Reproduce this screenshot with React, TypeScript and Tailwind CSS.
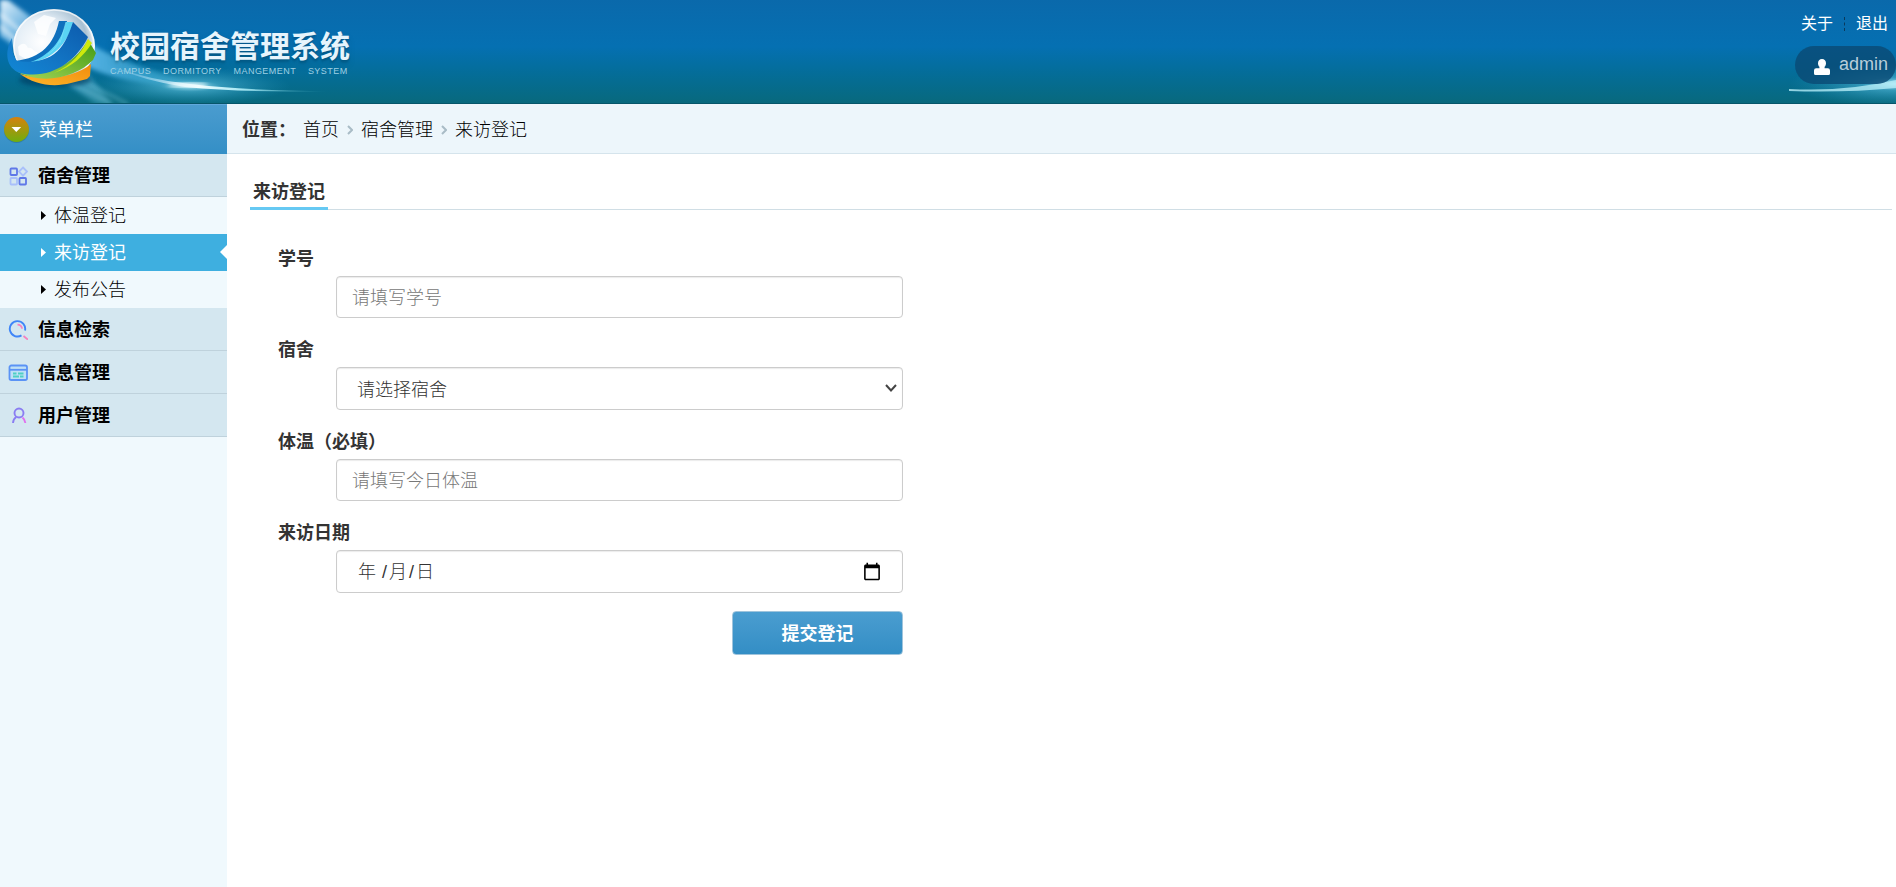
import React, { useState } from 'react';

interface MenuGroup {
  name: string;
  icon: React.ReactNode;
  items?: string[];
}

const GridIcon = () => (
  <svg width="20" height="20" viewBox="0 0 20 20" fill="none" strokeWidth="1.8">
    <rect x="2.5" y="2.5" width="6.500" height="6.500" rx="0.8" stroke="#5f78e8" />
    <path d="M15 1.500 19 5.600 15 9.700 11 5.600Z" stroke="#a9c0fa" />
    <rect x="2.5" y="12" width="6.500" height="6.500" rx="0.8" stroke="#a9c0fa" />
    <rect x="11.5" y="12" width="6.500" height="6.500" rx="0.8" stroke="#5f78e8" />
  </svg>
);

const SearchIcon = () => (
  <svg width="20" height="20" viewBox="0 0 20 20" fill="none" strokeWidth="1.9">
    <path d="M13.500 15.400A7.700 7.700 0 1 1 17 10.500" stroke="#3f86f8" />
    <path d="M9.500 4.600c2.500 0 4.200 1.800 4.600 4" stroke="#f583c0" />
    <path d="M15.500 16 20 19.600" stroke="#f583c0" />
  </svg>
);

const WindowIcon = () => (
  <svg width="20" height="20" viewBox="0 0 20 20" fill="none" strokeWidth="1.8">
    <rect x="1.500" y="2.500" width="17.500" height="14.500" rx="1.800" fill="#bfe0f6" stroke="#5b93f5" />
    <path d="M1.500 6.800H19" stroke="#5b93f5" />
    <path d="M5 10.500H8.500M10 10.500H15.500M5 13.500H11M12 13.500H15.500" stroke="#4fd0c4" strokeWidth="2.200" />
  </svg>
);

const UserIcon = () => (
  <svg width="20" height="20" viewBox="0 0 20 20" fill="none" strokeWidth="1.900">
    <circle cx="11" cy="7" r="4.500" stroke="#8a7df2" />
    <path d="M8.200 11C6.300 12.300 5.200 14.300 5 17" stroke="#8a7df2" />
    <path d="M14.500 11.500C16.300 13 17.200 14.800 17.400 17" stroke="#e070ee" />
  </svg>
);

const menu: MenuGroup[] = [
  { name: '宿舍管理', icon: <GridIcon />, items: ['体温登记', '来访登记', '发布公告'] },
  { name: '信息检索', icon: <SearchIcon /> },
  { name: '信息管理', icon: <WindowIcon /> },
  { name: '用户管理', icon: <UserIcon /> },
];

const LogoArt = () => (
  <svg className="absolute left-0 top-0" width="360" height="104" viewBox="0 0 360 104">
    <defs>
      <radialGradient id="glow">
        <stop offset="0" stopColor="#c9f6ff" stopOpacity="0.95" />
        <stop offset="0.3" stopColor="#5fc4e4" stopOpacity="0.5" />
        <stop offset="1" stopColor="#2a9cc4" stopOpacity="0" />
      </radialGradient>
      <linearGradient id="beam" x1="0" y1="0" x2="1" y2="1">
        <stop offset="0" stopColor="#e6f4fd" />
        <stop offset="0.35" stopColor="#5aaee4" stopOpacity="0.7" />
        <stop offset="1" stopColor="#5cb8d0" stopOpacity="0.4" />
      </linearGradient>
      <linearGradient id="sweep" x1="0" x2="1">
        <stop offset="0" stopColor="#58b4e6" />
        <stop offset="0.6" stopColor="#3aa6d2" stopOpacity="0.7" />
        <stop offset="1" stopColor="#3aa6d2" stopOpacity="0" />
      </linearGradient>
      <linearGradient id="tail" x1="0" x2="1">
        <stop offset="0" stopColor="#6fc0e8" stopOpacity="0.3" />
        <stop offset="0.4" stopColor="#f0fdff" />
        <stop offset="0.6" stopColor="#a4e6f2" />
        <stop offset="1" stopColor="#4fb8c8" stopOpacity="0" />
      </linearGradient>
      <radialGradient id="globe" cx="0.35" cy="0.45" r="0.65">
        <stop offset="0" stopColor="#ffffff" />
        <stop offset="0.5" stopColor="#e4eef6" />
        <stop offset="0.85" stopColor="#a8c0d2" />
        <stop offset="1" stopColor="#f0f7fc" />
      </radialGradient>
      <linearGradient id="ribbon" x1="1" y1="0" x2="0" y2="1">
        <stop offset="0" stopColor="#0c5aac" />
        <stop offset="0.6" stopColor="#1377c6" />
        <stop offset="1" stopColor="#1188d6" />
      </linearGradient>
      <linearGradient id="leaf" x1="1" y1="0" x2="0" y2="1">
        <stop offset="0" stopColor="#429a12" />
        <stop offset="1" stopColor="#a4d658" />
      </linearGradient>
      <linearGradient id="orange" x1="1" y1="0" x2="0" y2="1">
        <stop offset="0" stopColor="#f08c0c" />
        <stop offset="1" stopColor="#ffb52a" />
      </linearGradient>
      <filter id="soft" x="-20%" y="-20%" width="140%" height="140%">
        <feGaussianBlur stdDeviation="2" />
      </filter>
    </defs>
    <path d="M0 0H8L60 38 112 104H96L40 66 0 36Z" fill="url(#beam)" filter="url(#soft)" />
    <path d="M0 14 24 34M0 26 18 42" stroke="#ffffff" strokeWidth="4" opacity="0.5" filter="url(#soft)" />
    <path d="M84 40Q120 64 200 84 130 88 86 66Z" fill="url(#sweep)" filter="url(#soft)" />
    <path d="M70 82 112 104M80 80 128 104" stroke="#7cc8dc" strokeWidth="3" opacity="0.5" filter="url(#soft)" />
    <ellipse cx="190" cy="86" rx="100" ry="19" fill="url(#glow)" />
    <path d="M110 66Q150 80 190 84 250 91 330 91 250 93 185 87 145 81 110 66Z" fill="url(#tail)" />
    <ellipse cx="188" cy="85" rx="20" ry="2" fill="#f0fdff" filter="url(#soft)" />
    <ellipse cx="55" cy="80" rx="36" ry="7" fill="#033f63" opacity="0.7" filter="url(#soft)" />
    <ellipse cx="54" cy="46" rx="41" ry="37" fill="url(#globe)" />
    <ellipse cx="54" cy="46" rx="40" ry="36" fill="none" stroke="#fff" strokeWidth="1.500" opacity="0.7" />
    <path d="M18 47c4-5 8-4 10 1 5-1 5 4 9 4l2 6-10 3-10-6ZM34 22l10-7 12 3-6 6-4 12-8-2Z" fill="#fff" opacity="0.8" />
    <path d="M20 74C45 81 74 78 91 64L90 76 87 79 71 83C52 88 34 84 20 74Z" fill="url(#orange)" />
    <path d="M18 72C50 78 76 62 88 40L96 53 93 60C78 76 44 86 18 72Z" fill="url(#leaf)" />
    <path d="M54 73C72 65 82 52 88 39L92 43C84 56 72 67 54 73Z" fill="#cfe90c" />
    <path d="M15 61C42 58 54 44 59 21H67C64 44 48 62 20 64Z" fill="#0e70bd" />
    <path d="M28 63C50 56 62 40 66 22H73C68 42 54 60 28 63Z" fill="#5ad4f4" />
    <path d="M12 38C4 52 6 68 20 73 50 80 76 62 88 37L73 22C66 42 58 66 17 61 13 56 11 48 12 38Z" fill="url(#ribbon)" />
    <path d="M60 43 66 22M48 54C54 50 57 46 60 40" stroke="#8ae6fa" fill="none" opacity="0.6" />
  </svg>
);

const Header = () => (
  <header className="relative flex h-[104px] justify-between overflow-hidden border-b border-[#06566a] bg-linear-to-b from-[#0a69ab] via-[#0570b2] via-45% to-[#08697d]">
    <LogoArt />
    <div className="relative pl-[110px] pt-[27px] text-[#e6f4fc]">
      <h1 className="text-[30px] font-bold leading-10 text-shadow-lg">校园宿舍管理系统</h1>
      <p className="text-[9px] leading-2 tracking-wider text-[#9fd0e4]">CAMPUS&nbsp;&nbsp;&nbsp; DORMITORY&nbsp;&nbsp;&nbsp; MANGEMENT&nbsp;&nbsp;&nbsp; SYSTEM</p>
    </div>
    <svg className="absolute right-0 top-0" width="107" height="104" viewBox="0 0 107 104">
      <ellipse cx="107" cy="84" rx="107" ry="22" fill="url(#glow)" />
      <path d="M0 89Q55 92 107 80V88Q55 93 0 91Z" fill="#b4ecf6" opacity="0.8" />
    </svg>
    <div className="relative flex flex-col items-end">
      <nav className="flex items-center pr-2 pt-3 text-base leading-6 text-white">
        <a href="#about">关于</a>
        <span className="mx-[11px] h-[14px] border-l border-dashed border-[#0a3a5c]" />
        <a href="#logout">退出</a>
      </nav>
      <div className="mt-[10px] flex h-[38px] items-center gap-[9px] rounded-full bg-[#0a4a74]/80 pl-[19px] pr-2 text-lg text-[#b8ceda]">
        <svg width="16" height="16" viewBox="0 0 16 16" fill="#fff" className="mt-1">
          <path d="M8 0c2.500 0 4 1.800 4 4.200 0 1.600-.6 2.800-1.400 3.600v1.400h3.200Q16 9.200 16 11.500V14.500Q16 16 14.500 16H1.500Q0 16 0 14.500V11.500Q0 9.200 2.200 9.200H5.400V7.800C4.600 7 4 5.800 4 4.200 4 1.800 5.500 0 8 0Z" />
        </svg>
        <span className="pb-[2px] leading-8">admin</span>
      </div>
    </div>
  </header>
);

interface SidebarProps {
  active: string;
  onSelect: (name: string) => void;
}

const Sidebar: React.FC<SidebarProps> = ({ active, onSelect }) => (
  <aside className="w-[227px] shrink-0 bg-[#f0f9fd]">
    <div className="flex h-[50px] items-center gap-[10px] border-t border-[#61a8dc] bg-linear-to-b from-[#4a9ccf] to-[#348fc6] pl-1 text-lg text-white">
      <svg width="25" height="26" viewBox="0 0 25 26">
        <defs>
          <linearGradient id="badge" x1="0" y1="0" x2="0" y2="1">
            <stop offset="0" stopColor="#d5810f" />
            <stop offset="1" stopColor="#6fae0e" />
          </linearGradient>
        </defs>
        <circle cx="12.5" cy="13.5" r="12.500" fill="#2c6f96" opacity="0.6" />
        <circle cx="12.500" cy="12.500" r="12.500" fill="url(#badge)" />
        <path d="M7.500 10H17.200L12.300 15Z" fill="#fff" />
      </svg>
      菜单栏
    </div>
    {menu.map((group) => (
      <div key={group.name}>
        <button className="flex h-[43px] w-full items-center gap-[10px] border-b border-[#bfd2dc] bg-[#d4e7f0] pl-2 pt-[2px] text-lg font-bold text-black">
          {group.icon}
          {group.name}
        </button>
        {group.items && (
          <ul>
            {group.items.map((item) => (
              <li key={item}>
                <a
                  href="#"
                  onClick={() => onSelect(item)}
                  className={`relative flex h-[37px] items-center gap-2 pl-[41px] text-lg ${
                    item === active ? 'bg-[#3eafe0] text-white' : 'font-light text-black'
                  }`}
                >
                  <svg width="5" height="9" viewBox="0 0 5 9" fill="currentColor">
                    <path d="M0 0 5 4.500 0 9Z" />
                  </svg>
                  {item}
                  {item === active && (
                    <svg className="absolute right-0 top-[11px]" width="7" height="14" viewBox="0 0 7 14" fill="#fff">
                      <path d="M7 0V14L0 7Z" />
                    </svg>
                  )}
                </a>
              </li>
            ))}
          </ul>
        )}
      </div>
    ))}
  </aside>
);

const Chevron = () => (
  <svg width="6" height="10" viewBox="0 0 6 10" fill="none" stroke="#a9bcc6" strokeWidth="2">
    <path d="M1 1 5 5 1 9" />
  </svg>
);

const labelClass = 'flex h-[49px] items-center pt-[14px] pl-[28px] text-lg font-bold text-[#333]';
const fieldClass =
  'ml-[86px] block w-[567px] rounded border border-[#ccc] bg-white text-lg font-light text-[#333] shadow-[inset_0_1px_1px_rgba(0,0,0,0.08)] outline-none placeholder:text-[#777]';

const VisitForm = () => {
  const [date, setDate] = useState('');

  return (
    <form className="pt-[17px]" onSubmit={(e) => e.preventDefault()}>
      <label htmlFor="studentId" className={labelClass}>学号</label>
      <input id="studentId" placeholder="请填写学号" className={`${fieldClass} h-[42px] px-[15px] pt-[2px]`} />

      <label htmlFor="dorm" className={labelClass}>宿舍</label>
      <div className="relative w-[653px]">
        <select id="dorm" className={`${fieldClass} h-[43px] appearance-none px-5 pt-[2px]`}>
          <option>请选择宿舍</option>
        </select>
        <svg className="pointer-events-none absolute right-[6px] top-[17px]" width="12" height="8" viewBox="0 0 12 8" fill="none" stroke="#444" strokeWidth="2">
          <path d="M1 1 6 6.500 11 1" />
        </svg>
      </div>

      <label htmlFor="temperature" className={labelClass}>体温（必填）</label>
      <input id="temperature" placeholder="请填写今日体温" className={`${fieldClass} h-[42px] px-[15px] pt-[2px]`} />

      <label htmlFor="visitDate" className={labelClass}>来访日期</label>
      <div className="relative">
        <input
          id="visitDate"
          type="date"
          value={date}
          onChange={(e) => setDate(e.target.value)}
          className={`${fieldClass} h-[43px] px-5 [&::-webkit-calendar-picker-indicator]:size-5 [&::-webkit-calendar-picker-indicator]:p-0 ${
            date ? '' : '[&::-webkit-datetime-edit]:opacity-0'
          }`}
        />
        {!date && (
          <span className="pointer-events-none absolute left-[108px] top-2 flex text-lg leading-7 font-light text-[#333]">
            <span className="mr-[6px]">年</span>
            <span className="mr-[2px]">/</span>
            <span>月</span>
            <span className="mx-[2px]">/</span>
            <span>日</span>
          </span>
        )}
      </div>

      <div className="mt-[18px] flex w-[653px] justify-end">
        <button className="h-11 w-[171px] rounded border border-[#9fc4dc] bg-linear-to-b from-[#4a9dd0] to-[#338ec5] pt-[2px] text-lg font-bold text-white">
          提交登记
        </button>
      </div>
    </form>
  );
};

export default function App() {
  const [active, setActive] = useState('来访登记');

  return (
    <div className="flex min-h-screen flex-col bg-white font-['Liberation_Sans','Noto_Sans_CJK_SC',sans-serif]">
      <Header />
      <div className="flex grow">
        <Sidebar active={active} onSelect={setActive} />
        <main className="grow">
          <nav className="flex h-[50px] items-center border-b border-[#d5e4ec] bg-[#edf6fb] pl-[15px] pt-[2px] text-lg text-black">
            <span className="mr-[7px] font-bold text-[#333]">位置：</span>
            <ol className="flex items-center gap-2 font-light">
              <li><a href="#">首页</a></li>
              <li aria-hidden="true"><Chevron /></li>
              <li><a href="#">宿舍管理</a></li>
              <li aria-hidden="true"><Chevron /></li>
              <li><a href="#">来访登记</a></li>
            </ol>
          </nav>
          <div className="pl-[23px] pr-1 pt-5">
            <div className="flex h-9 border-b border-[#d0dee5]">
              <h2 className="-mb-px h-9 border-b-3 border-[#66c9f3] px-[3px] text-lg leading-9 font-bold text-[#333]">来访登记</h2>
            </div>
            <VisitForm />
          </div>
        </main>
      </div>
    </div>
  );
}
